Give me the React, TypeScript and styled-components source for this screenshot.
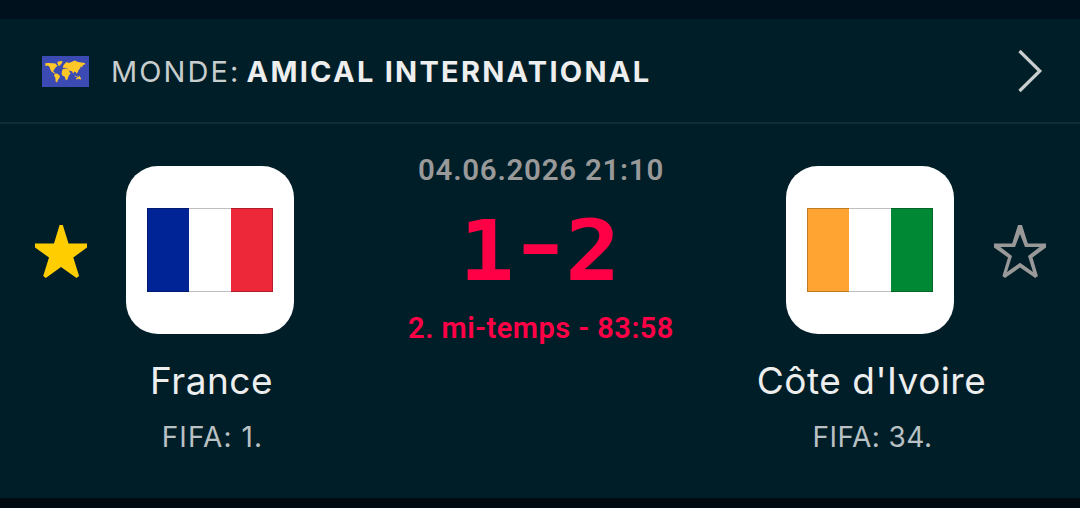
import React from "react";
import styled, { createGlobalStyle } from "styled-components";

const GlobalStyle = createGlobalStyle`
  * { box-sizing: border-box; }
  body { margin: 0; background: #001e28; }
`;

const Screen = styled.main`
  display: flex;
  flex-direction: column;
  width: 1080px;
  height: 508px;
  overflow: hidden;
  background: #001e28;
  font-family: Inter, "Liberation Sans", sans-serif;
  white-space: nowrap;
`;

const TopStrip = styled.div`
  flex: none;
  height: 19px;
  background: #00111e;
`;

const BottomStrip = styled.div`
  flex: none;
  height: 10px;
  background: #000a10;
`;

const LeagueHeader = styled.header`
  display: flex;
  align-items: center;
  flex: none;
  height: 105px;
  padding: 2px 37px 0 42px;
  border-bottom: 2px solid #0f2d37;
`;

const LeagueTitle = styled.h1`
  flex: 1;
  margin: 0 0 0 22px;
  font-size: 29px;
  line-height: 36px;
  font-weight: 400;
  color: #eeeeee;
`;

const Country = styled.span`
  letter-spacing: 2.1px;
  color: #c8cdcd;
`;

const League = styled.span`
  margin-left: 6px;
  font-weight: 700;
  letter-spacing: 2.25px;
`;

const Match = styled.section`
  display: grid;
  grid-template-columns: 122px 176px 484px 176px 122px;
  flex: 1;
  padding-top: 42px;
`;

const Favourite = styled.div`
  display: flex;
  justify-content: center;
  padding-top: 59px;
`;

const Team = styled.div`
  display: flex;
  flex-direction: column;
  align-items: center;
`;

const Crest = styled.div`
  display: flex;
  align-items: center;
  justify-content: center;
  width: 168px;
  height: 168px;
  border-radius: 32px;
  background: #ffffff;
`;

const Flag = styled.div<{ $left: string; $right: string }>`
  width: 126px;
  height: 84px;
  border: 1px solid rgba(0, 0, 0, 0.25);
  background: linear-gradient(
      90deg,
      ${(p) => p.$left} 33.333%,
      #ffffff 33.333% 66.666%,
      ${(p) => p.$right} 66.666%
    )
    border-box;
`;

const TeamName = styled.div`
  margin-top: 23px;
  padding-left: 3px;
  font-size: 37px;
  line-height: 48px;
  letter-spacing: 0.5px;
  color: #eeeeee;
`;

const Ranking = styled.div<{ $spacing: number }>`
  margin-top: 14px;
  padding-left: 5px;
  font-size: 28px;
  line-height: 36px;
  letter-spacing: ${(p) => p.$spacing}px;
  color: #b9c1c4;
`;

const ScoreColumn = styled.div`
  display: flex;
  flex-direction: column;
  align-items: center;
`;

const Kickoff = styled.div`
  margin-top: -14px;
  padding-left: 2px;
  font-family: Roboto, Inter, sans-serif;
  font-size: 29.5px;
  line-height: 36px;
  font-weight: 600;
  letter-spacing: 0.73px;
  color: #999999;
`;

const Score = styled.div`
  margin-top: 13px;
  padding-right: 3px;
  font-family: "DejaVu Sans Mono", "Liberation Mono", monospace;
  font-size: 84px;
  line-height: 100px;
  font-weight: 700;
  letter-spacing: -2px;
  color: #ff0046;
  transform: scaleX(1.09);
`;

const Dash = styled.span`
  display: inline-block;
  transform: translateY(-5px) scale(1.2, 0.8);
`;

const Period = styled.div`
  margin-top: 9px;
  padding-left: 2px;
  font-family: Roboto, Inter, sans-serif;
  font-size: 29px;
  line-height: 36px;
  font-weight: 600;
  letter-spacing: 0.5px;
  color: #ff0046;
`;

const WorldFlag = () => (
  <svg width="47" height="31" viewBox="36 33 141 94" preserveAspectRatio="none">
    <path d="M36 33h141v94H36z" fill="#3c4bb4" />
    <g fill="#ffc828">
      <path d="M46 55l8-1 14 1 8 1 7 7-5 3-3 5-4 5-1 4 6 5-3 1-9-6-4-9-2-6-6-3-6 1z" />
      <path d="M82 51l9-3 7 1-3 7-5 5-3 3-4-7z" />
      <path d="M75 86l8 1 7 7-2 6-4 5-3 8-4-3-1-11-4-7z" />
      <path d="M98 73l9-2 9 3 3 8 3 3-6 8-3 10-5 4-4-11-8-5-1-9z" />
      <path d="M98 69l2-7 6-8 6-3 3 3 8-2 11-5 10 4 20 3 2 4-7 2-3 7-4-3-1 6-5 5-3 9-3-1 2 6-5-7-4-2-3 7-4-8-9-2-5-6-7-2z" />
      <path d="M134 91l7 4 6 2-4 1-7-3zM138 101l8-4 2-5 5 9-1 4-6-3-7 2z" />
    </g>
  </svg>
);

const ChevronIcon = styled.svg`
  margin-bottom: 2px;
`;

const Chevron = () => (
  <ChevronIcon width="26" height="44" viewBox="0 0 26 44" fill="none">
    <path d="M2.500 2L22.800 22 2.500 42" stroke="#c8cdcd" strokeWidth="3.2" />
  </ChevronIcon>
);

const StarFilled = () => (
  <svg width="54" height="54" viewBox="0 0 54 54">
    <path
      d="M25.6 0h3.2L34.5 18.500H53v4L39.300 32.500l5.800 18.500-2.600 2L27 42 11.800 53l-2.600-2L15 32.500 1 22.500v-4h19z"
      fill="#ffcd00"
    />
  </svg>
);

const StarOutline = () => (
  <svg width="54" height="54" viewBox="0 0 54 54">
    <path
      fillRule="evenodd"
      d="M26 0h4L35.800 18.500H54v4L40.500 32.500l5.400 18.500-2.600 2L28 42.500 13 53l-2.600-2L16 32.500 2 22.500v-4h18.200z
         M28 9L23 22H8.400L20 31 15 47 28 37.800 41 47 36 31 47.600 22H33z"
      fill="#999999"
    />
  </svg>
);

export default function App() {
  return (
    <>
      <GlobalStyle />
      <Screen>
        <TopStrip />
        <LeagueHeader>
          <WorldFlag />
          <LeagueTitle>
            <Country>MONDE:</Country>
            <League>AMICAL INTERNATIONAL</League>
          </LeagueTitle>
          <Chevron />
        </LeagueHeader>
        <Match>
          <Favourite>
            <StarFilled />
          </Favourite>
          <Team>
            <Crest>
              <Flag $left="#002395" $right="#ed2939" />
            </Crest>
            <TeamName>France</TeamName>
            <Ranking $spacing={1.1}>FIFA: 1.</Ranking>
          </Team>
          <ScoreColumn>
            <Kickoff>04.06.2026 21:10</Kickoff>
            <Score>
              1<Dash>-</Dash>2
            </Score>
            <Period>2. mi-temps - 83:58</Period>
          </ScoreColumn>
          <Team>
            <Crest>
              <Flag $left="#ffa333" $right="#008835" />
            </Crest>
            <TeamName>Côte d'Ivoire</TeamName>
            <Ranking $spacing={0.45}>FIFA: 34.</Ranking>
          </Team>
          <Favourite>
            <StarOutline />
          </Favourite>
        </Match>
        <BottomStrip />
      </Screen>
    </>
  );
}
